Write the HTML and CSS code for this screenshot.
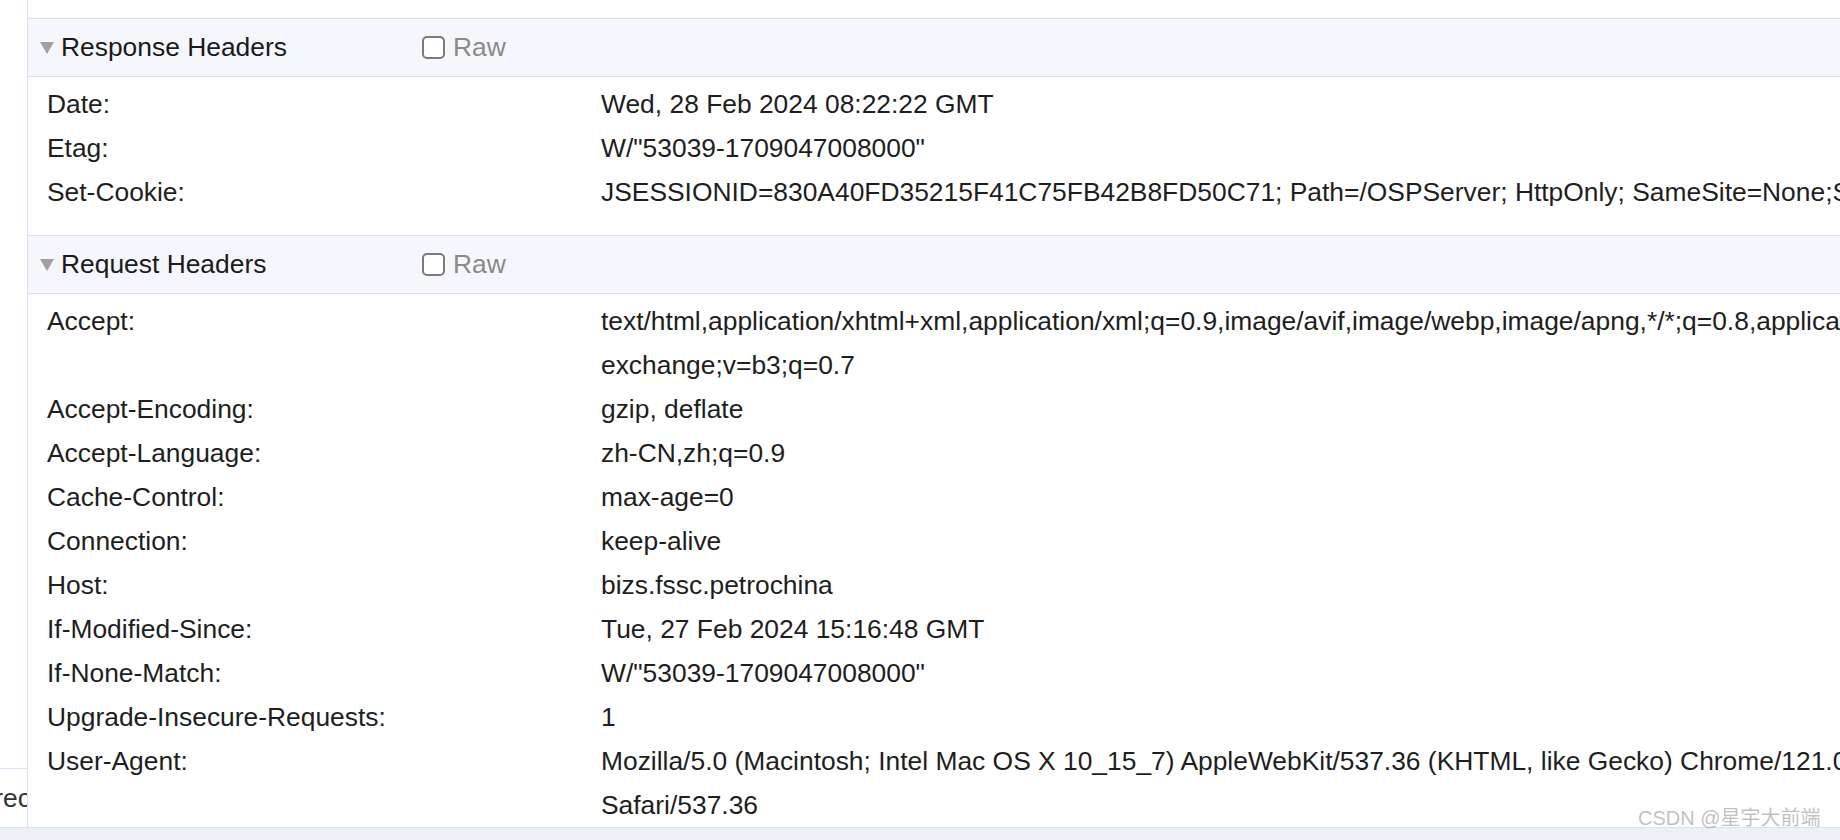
FILE: index.html
```html
<!DOCTYPE html>
<html lang="en">
<head>
<meta charset="utf-8">
<title>Headers</title>
<link rel="stylesheet" href="styles.css">
</head>
<body>
<div class="page">
  <aside class="side">
    <div class="side-fill"></div>
    <div class="side-item"><span class="side-text">Indirec</span></div>
  </aside>
  <main class="main">
    <section class="section">
      <header class="section-header">
        <span class="caret"></span>
        <span class="section-title">Response Headers</span>
        <span class="check"></span>
        <span class="raw">Raw</span>
      </header>
      <div class="rows rows-response">
        <div class="label">Date:</div><div class="value">Wed, 28 Feb 2024 08:22:22 GMT</div>
        <div class="label">Etag:</div><div class="value">W/"53039-1709047008000"</div>
        <div class="label">Set-Cookie:</div><div class="value">JSESSIONID=830A40FD35215F41C75FB42B8FD50C71; Path=/OSPServer; HttpOnly; SameSite=None;Secure</div>
      </div>
    </section>
    <section class="section">
      <header class="section-header">
        <span class="caret"></span>
        <span class="section-title">Request Headers</span>
        <span class="check"></span>
        <span class="raw">Raw</span>
      </header>
      <div class="rows">
        <div class="label">Accept:</div><div class="value">text/html,application/xhtml+xml,application/xml;q=0.9,image/avif,image/webp,image/apng,*/*;q=0.8,application/signed-<br>exchange;v=b3;q=0.7</div>
        <div class="label">Accept-Encoding:</div><div class="value">gzip, deflate</div>
        <div class="label">Accept-Language:</div><div class="value">zh-CN,zh;q=0.9</div>
        <div class="label">Cache-Control:</div><div class="value">max-age=0</div>
        <div class="label">Connection:</div><div class="value">keep-alive</div>
        <div class="label">Host:</div><div class="value">bizs.fssc.petrochina</div>
        <div class="label">If-Modified-Since:</div><div class="value">Tue, 27 Feb 2024 15:16:48 GMT</div>
        <div class="label">If-None-Match:</div><div class="value">W/"53039-1709047008000"</div>
        <div class="label">Upgrade-Insecure-Requests:</div><div class="value">1</div>
        <div class="label">User-Agent:</div><div class="value">Mozilla/5.0 (Macintosh; Intel Mac OS X 10_15_7) AppleWebKit/537.36 (KHTML, like Gecko) Chrome/121.0.0.0<br>Safari/537.36</div>
      </div>
    </section>
  </main>
</div>
<div class="footer"></div>
<div class="watermark">CSDN @星宇大前端</div>
</body>
</html>
```
FILE: styles.css
```css
html, body {
  margin: 0;
  padding: 0;
}
body {
  width: 1840px;
  height: 840px;
  overflow: hidden;
  background: #ffffff;
  font-family: "Liberation Sans", Arial, "Noto Sans CJK SC", sans-serif;
  color: #1e1e1e;
  position: relative;
}
.page {
  display: grid;
  grid-template-columns: 28px 1fr;
  height: 827px;
}
.side {
  display: flex;
  flex-direction: column;
  border-right: 1px solid #d6e2f7;
}
.side-fill {
  flex: 1;
}
.side-item {
  height: 58px;
  border-top: 1px solid #d6e2f7;
  display: flex;
  justify-content: flex-end;
  align-items: center;
  overflow: hidden;
  font-size: 26.4px;
  color: #333333;
}
.side-text {
  margin-right: -4px;
  white-space: nowrap;
}
.main {
  overflow: hidden;
  padding-top: 18px;
  font-size: 26.4px;
}
.section-header {
  display: flex;
  align-items: center;
  height: 57px;
  padding-left: 12px;
  background: #f5f7fc;
  border-top: 1px solid #d6e2f7;
  border-bottom: 1px solid #d6e2f7;
  white-space: nowrap;
}
.caret {
  width: 0;
  height: 0;
  border-left: 7px solid transparent;
  border-right: 7px solid transparent;
  border-top: 12px solid #a0a0a0;
  margin-right: 7px;
}
.section-title {
  width: 361px;
  color: #1a1a1a;
}
.check {
  box-sizing: border-box;
  width: 23px;
  height: 23px;
  border: 2px solid #7b7b7b;
  border-radius: 5px;
  background: #ffffff;
  margin-right: 8px;
}
.raw {
  color: #8a8a8a;
}
.rows {
  display: grid;
  grid-template-columns: 573px 1fr;
  align-items: start;
  line-height: 44px;
  padding-top: 5px;
}
.rows-response {
  padding-bottom: 21px;
}
.label {
  padding-left: 19px;
  white-space: nowrap;
}
.value {
  white-space: nowrap;
}
.footer {
  height: 12px;
  background: #eef0f7;
  border-top: 1px solid #d6e2f7;
}
.watermark {
  position: absolute;
  left: 1638px;
  top: 806px;
  font-size: 20px;
  line-height: 24px;
  color: rgba(150, 150, 150, 0.6);
  font-family: "Liberation Sans", Arial, "Noto Sans CJK SC", sans-serif;
  white-space: nowrap;
}
```
